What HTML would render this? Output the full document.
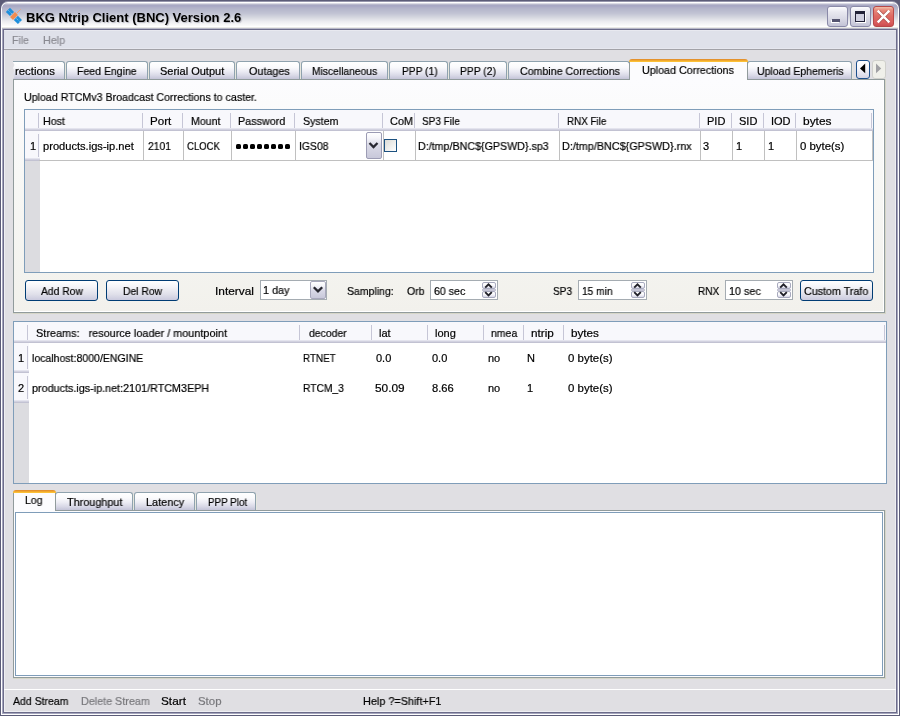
<!DOCTYPE html>
<html><head><meta charset="utf-8"><style>
html,body{margin:0;padding:0;width:900px;height:716px;overflow:hidden;background:#5c5c78}
div,span,svg{position:absolute}
span{will-change:transform;-webkit-text-stroke:0.2px currentColor;font-family:"Liberation Sans",sans-serif;line-height:20px;white-space:pre;color:#000;transform-origin:0 0}
</style></head><body>
<div style="left:0px;top:0px;width:900px;height:716px;background:#5c5c78;border-radius:8px 8px 0 0"></div>
<div style="left:1px;top:1px;width:898px;height:715px;background:#9696ac;border-radius:7px 7px 0 0"></div>
<div style="left:1px;top:2px;width:898px;height:713px;background:#ffffff;border-radius:7px 7px 0 0"></div>
<div style="left:2px;top:3px;width:896px;height:711px;background:#a6a6be;border-radius:6px 6px 0 0"></div>
<div style="left:2px;top:3px;width:896px;height:26px;border-radius:6px 6px 0 0;background:linear-gradient(#dcdce6 0.5px,#b8b8cc 1.5px,#a8a8c4 2.5px,#aaaac6 3.5px,#b0b0c8 4.5px,#b6b8cc 6.5px,#c2c4d4 10.5px,#d6d8e0 14.5px,#ececf0 18.5px,#fafafa 22.5px,#ffffff 23.5px,#eaeae6 24.5px,#b8b8c8 25.5px)"></div>
<div style="left:1px;top:715px;width:898px;height:1px;background:#5c5c78"></div>
<div style="left:1px;top:714px;width:898px;height:1px;background:#ffffff"></div>
<div style="left:2px;top:713px;width:896px;height:1px;background:#a6a6be"></div>
<div style="left:3px;top:29px;width:894px;height:684px;background:#6c6c8a"></div>
<div style="left:4px;top:30px;width:892px;height:682px;background:#eeeef2"></div>
<div style="left:5px;top:31px;width:890px;height:680px;background:#e0dfe3"></div>
<div style="left:4px;top:30px;width:892px;height:20px;background:#dfe1ea"></div>
<div style="left:4px;top:30px;width:892px;height:1px;background:#e8e9f0"></div>
<div style="left:4px;top:48px;width:892px;height:1px;background:#e6e7ef"></div>
<div style="left:4px;top:49px;width:892px;height:1px;background:#a2a2a8"></div>
<div style="left:827px;top:6px;width:19px;height:19px;border-radius:3px;background:linear-gradient(#fcfcfe 0px,#e8e8f0 5px,#d8d8e4 12px,#c0c0d4 20px);border:1px solid #8a8aa8"><div style="left:4px;top:12px;width:8px;height:3px;background:#545470;box-shadow:-1px 1px 0 #ffffff"></div></div>
<div style="left:850px;top:6px;width:19px;height:19px;border-radius:3px;background:linear-gradient(#fcfcfe 0px,#e8e8f0 5px,#d8d8e4 12px,#c0c0d4 20px);border:1px solid #8a8aa8"><div style="left:4px;top:4px;width:8px;height:7px;border:1px solid #222238;border-top:3px solid #222238;background:#d0d0e0;box-shadow:1px 1px 0 #ffffff"></div></div>
<div style="left:873px;top:6px;width:19px;height:19px;border-radius:3px;background:linear-gradient(#f2c0a8 0px,#e88a7c 3px,#de6a64 9px,#d85c5c 16px,#cc4c50 19px);border:1px solid #b84848"><svg style="position:absolute;left:0;top:0" width="19" height="19"><path d="M4.6 4.6 L14.4 14.4 M14.4 4.6 L4.6 14.4" stroke="#702020" stroke-opacity="0.6" stroke-width="3.6" stroke-linecap="butt"/><path d="M4.6 4.6 L14.4 14.4 M14.4 4.6 L4.6 14.4" stroke="#ffffff" stroke-width="2.5" stroke-linecap="square"/></svg></div>
<svg style="position:absolute;left:0;top:0" width="30" height="30"><g transform="translate(14 16) rotate(-45)"><rect x="-2.9" y="-8.6" width="5.8" height="5.8" fill="#1e8fdc"/><rect x="-2.9" y="2.6" width="5.8" height="5.8" fill="#1e8fdc"/><line x1="0" y1="-8.6" x2="0" y2="8.4" stroke="#8cc8ee" stroke-width="0.8" stroke-dasharray="1.2 1"/><rect x="-3.5" y="-2.1" width="7" height="4.2" fill="#f08c50"/><line x1="3.5" y1="0" x2="9.3" y2="0" stroke="#f4a070" stroke-width="0.9"/></g></svg>
<div style="left:13px;top:79px;width:873px;height:235px;background:#d6d6c8"></div>
<div style="left:13px;top:79px;width:872px;height:234px;background:#919b9c"></div>
<div style="left:14px;top:80px;width:870px;height:232px;background:#ffffff"></div>
<div style="left:14px;top:80px;width:869px;height:231px;background:linear-gradient(#fcfcfe 0%,#f8f8f6 40%,#f2f1ec 100%)"></div>
<div style="left:13px;top:61px;width:52px;height:18px;background:linear-gradient(#ffffff 0%,#fafafc 30%,#ececf4 55%,#d8d8e6 80%,#c4c4d8 100%);border:1px solid #8fa2ae;border-bottom:none;border-left:none;border-radius:0 3px 0 0;box-sizing:border-box"></div><div style="left:65px;top:63px;width:1px;height:16px;background:#e6e6de"></div>
<div style="left:66px;top:61px;width:82px;height:18px;background:linear-gradient(#ffffff 0%,#fafafc 30%,#ececf4 55%,#d8d8e6 80%,#c4c4d8 100%);border:1px solid #8fa2ae;border-bottom:none;border-radius:3px 3px 0 0;box-sizing:border-box"></div><div style="left:148px;top:63px;width:1px;height:16px;background:#e6e6de"></div>
<div style="left:149px;top:61px;width:86px;height:18px;background:linear-gradient(#ffffff 0%,#fafafc 30%,#ececf4 55%,#d8d8e6 80%,#c4c4d8 100%);border:1px solid #8fa2ae;border-bottom:none;border-radius:3px 3px 0 0;box-sizing:border-box"></div><div style="left:235px;top:63px;width:1px;height:16px;background:#e6e6de"></div>
<div style="left:236px;top:61px;width:64px;height:18px;background:linear-gradient(#ffffff 0%,#fafafc 30%,#ececf4 55%,#d8d8e6 80%,#c4c4d8 100%);border:1px solid #8fa2ae;border-bottom:none;border-radius:3px 3px 0 0;box-sizing:border-box"></div><div style="left:300px;top:63px;width:1px;height:16px;background:#e6e6de"></div>
<div style="left:301px;top:61px;width:87px;height:18px;background:linear-gradient(#ffffff 0%,#fafafc 30%,#ececf4 55%,#d8d8e6 80%,#c4c4d8 100%);border:1px solid #8fa2ae;border-bottom:none;border-radius:3px 3px 0 0;box-sizing:border-box"></div><div style="left:388px;top:63px;width:1px;height:16px;background:#e6e6de"></div>
<div style="left:389px;top:61px;width:59px;height:18px;background:linear-gradient(#ffffff 0%,#fafafc 30%,#ececf4 55%,#d8d8e6 80%,#c4c4d8 100%);border:1px solid #8fa2ae;border-bottom:none;border-radius:3px 3px 0 0;box-sizing:border-box"></div><div style="left:448px;top:63px;width:1px;height:16px;background:#e6e6de"></div>
<div style="left:449px;top:61px;width:58px;height:18px;background:linear-gradient(#ffffff 0%,#fafafc 30%,#ececf4 55%,#d8d8e6 80%,#c4c4d8 100%);border:1px solid #8fa2ae;border-bottom:none;border-radius:3px 3px 0 0;box-sizing:border-box"></div><div style="left:507px;top:63px;width:1px;height:16px;background:#e6e6de"></div>
<div style="left:508px;top:61px;width:122px;height:18px;background:linear-gradient(#ffffff 0%,#fafafc 30%,#ececf4 55%,#d8d8e6 80%,#c4c4d8 100%);border:1px solid #8fa2ae;border-bottom:none;border-radius:3px 3px 0 0;box-sizing:border-box"></div><div style="left:630px;top:63px;width:1px;height:16px;background:#e6e6de"></div>
<div style="left:747px;top:61px;width:105px;height:18px;background:linear-gradient(#ffffff 0%,#fafafc 30%,#ececf4 55%,#d8d8e6 80%,#c4c4d8 100%);border:1px solid #8fa2ae;border-bottom:none;border-radius:3px 3px 0 0;box-sizing:border-box"></div><div style="left:852px;top:63px;width:1px;height:16px;background:#e6e6de"></div>
<div style="left:629px;top:61px;width:119px;height:19px;background:#fcfcfe;border:1px solid #919b9c;border-bottom:none;border-top:none;box-sizing:border-box"></div><div style="left:629px;top:59px;width:119px;height:3px;background:linear-gradient(#e08a2c 0px,#e8982c 1px,#f8b830 2px,#ffc83c 3px);border-radius:3px 3px 0 0"></div>
<svg style="position:absolute;left:11px;top:62px" width="4" height="17"><path d="M0 0 L2 0 L3.5 3 L2 6 L3.5 9 L2 12 L3.5 15 L2 17 L0 17 Z" fill="#e0dfe3"/></svg>
<div style="left:856px;top:60px;width:14px;height:19px;border:1px solid #1c4f8c;border-radius:3px;background:linear-gradient(#ffffff 0%,#f8f8fc 40%,#d4d4e4 100%);box-sizing:border-box"></div>
<svg style="position:absolute;left:856px;top:60px" width="14" height="19"><path d="M9.2 3.6 L9.2 13.2 L4 8.4 Z" fill="#000"/></svg>
<div style="left:872px;top:60px;width:14px;height:19px;border:1px solid #d0d0cc;border-radius:3px;background:#f0f0ea;box-sizing:border-box"></div>
<svg style="position:absolute;left:872px;top:60px" width="14" height="19"><path d="M4 3.6 L4 13.2 L9.2 8.4 Z" fill="#a0a0a4"/></svg>
<div style="left:24px;top:109px;width:850px;height:164px;background:#7f9db9"></div>
<div style="left:25px;top:110px;width:848px;height:162px;background:#ffffff"></div>
<div style="left:25px;top:110px;width:848px;height:21px;background:#f8f8fc"></div>
<div style="left:25px;top:128px;width:848px;height:1px;background:#e4e4ee"></div><div style="left:25px;top:129px;width:848px;height:1px;background:#d2d2e0"></div><div style="left:25px;top:130px;width:848px;height:1px;background:#c2c2d2"></div>
<div style="left:38px;top:113px;width:1px;height:15px;background:#c6c6d6"></div>
<div style="left:142px;top:113px;width:1px;height:15px;background:#c6c6d6"></div>
<div style="left:182px;top:113px;width:1px;height:15px;background:#c6c6d6"></div>
<div style="left:230px;top:113px;width:1px;height:15px;background:#c6c6d6"></div>
<div style="left:294px;top:113px;width:1px;height:15px;background:#c6c6d6"></div>
<div style="left:382px;top:113px;width:1px;height:15px;background:#c6c6d6"></div>
<div style="left:414px;top:113px;width:1px;height:15px;background:#c6c6d6"></div>
<div style="left:558px;top:113px;width:1px;height:15px;background:#c6c6d6"></div>
<div style="left:699px;top:113px;width:1px;height:15px;background:#c6c6d6"></div>
<div style="left:731px;top:113px;width:1px;height:15px;background:#c6c6d6"></div>
<div style="left:763px;top:113px;width:1px;height:15px;background:#c6c6d6"></div>
<div style="left:795px;top:113px;width:1px;height:15px;background:#c6c6d6"></div>
<div style="left:871px;top:113px;width:1px;height:15px;background:#c6c6d6"></div>
<div style="left:25px;top:131px;width:15px;height:27px;background:#f8f8fc"></div>
<div style="left:38px;top:134px;width:1px;height:23px;background:#c6c6d6"></div>
<div style="left:25px;top:158px;width:15px;height:1px;background:#e4e4ee"></div><div style="left:25px;top:159px;width:15px;height:1px;background:#d2d2e0"></div><div style="left:25px;top:160px;width:15px;height:1px;background:#c2c2d2"></div>
<div style="left:25px;top:161px;width:15px;height:111px;background:#dcdce0"></div>
<div style="left:39px;top:160px;width:834px;height:1px;background:#c0c0c0"></div>
<div style="left:143px;top:131px;width:1px;height:30px;background:#c0c0c0"></div>
<div style="left:183px;top:131px;width:1px;height:30px;background:#c0c0c0"></div>
<div style="left:231px;top:131px;width:1px;height:30px;background:#c0c0c0"></div>
<div style="left:295px;top:131px;width:1px;height:30px;background:#c0c0c0"></div>
<div style="left:383px;top:131px;width:1px;height:30px;background:#c0c0c0"></div>
<div style="left:415px;top:131px;width:1px;height:30px;background:#c0c0c0"></div>
<div style="left:559px;top:131px;width:1px;height:30px;background:#c0c0c0"></div>
<div style="left:700px;top:131px;width:1px;height:30px;background:#c0c0c0"></div>
<div style="left:732px;top:131px;width:1px;height:30px;background:#c0c0c0"></div>
<div style="left:764px;top:131px;width:1px;height:30px;background:#c0c0c0"></div>
<div style="left:796px;top:131px;width:1px;height:30px;background:#c0c0c0"></div>
<div style="left:872px;top:131px;width:1px;height:30px;background:#c0c0c0"></div>
<div style="left:366px;top:132px;width:16px;height:27px;border:1px solid #9c9cb4;border-radius:2px;background:linear-gradient(#ffffff 0%,#f6f6fa 20%,#dcdce8 45%,#c8c8da 100%);box-sizing:border-box"></div>
<svg style="position:absolute;left:366px;top:132px" width="16" height="27"><path d="M3.5 11 L7.5 15 L11.5 11" stroke="#282830" stroke-width="2.3" fill="none"/></svg>
<div style="left:384px;top:139px;width:13px;height:13px;border:1px solid #1c5180;background:linear-gradient(135deg,#dcdcd7,#ffffff);box-sizing:border-box"></div>
<div style="left:236px;top:144px;width:5px;height:5px;border-radius:1.6px;background:#000"></div>
<div style="left:243px;top:144px;width:5px;height:5px;border-radius:1.6px;background:#000"></div>
<div style="left:250px;top:144px;width:5px;height:5px;border-radius:1.6px;background:#000"></div>
<div style="left:257px;top:144px;width:5px;height:5px;border-radius:1.6px;background:#000"></div>
<div style="left:264px;top:144px;width:5px;height:5px;border-radius:1.6px;background:#000"></div>
<div style="left:271px;top:144px;width:5px;height:5px;border-radius:1.6px;background:#000"></div>
<div style="left:278px;top:144px;width:5px;height:5px;border-radius:1.6px;background:#000"></div>
<div style="left:285px;top:144px;width:5px;height:5px;border-radius:1.6px;background:#000"></div>
<div style="left:25px;top:280px;width:73px;height:21px;border:1px solid #003c74;border-radius:3px;background:linear-gradient(#ffffff 0%,#f4f4f8 30%,#e0e0ea 70%,#cacade 100%);box-sizing:border-box"></div>
<div style="left:106px;top:280px;width:73px;height:21px;border:1px solid #003c74;border-radius:3px;background:linear-gradient(#ffffff 0%,#f4f4f8 30%,#e0e0ea 70%,#cacade 100%);box-sizing:border-box"></div>
<div style="left:800px;top:280px;width:73px;height:21px;border:1px solid #003c74;border-radius:3px;background:linear-gradient(#ffffff 0%,#f4f4f8 30%,#e0e0ea 70%,#cacade 100%);box-sizing:border-box"></div>
<div style="left:260px;top:280px;width:67px;height:20px;border:1px solid #a5acb2;background:#ffffff;box-sizing:border-box"></div><div style="left:310px;top:281px;width:16px;height:18px;border:1px solid #a8a8bc;border-radius:2px;background:linear-gradient(#ffffff 0%,#f4f4f8 25%,#d8d8e6 55%,#c8c8da 100%);box-sizing:border-box"></div><svg style="position:absolute;left:310px;top:281px" width="16" height="18"><path d="M3.8 6.2 L8 10.4 L12.2 6.2" stroke="#282830" stroke-width="2.3" fill="none"/></svg>
<div style="left:430px;top:280px;width:68px;height:20px;border:1px solid #a5acb2;background:#ffffff;box-sizing:border-box"></div><div style="left:482px;top:282px;width:14px;height:7px;border:1px solid #a8aabe;border-radius:2px;background:linear-gradient(#ffffff 0%,#f8f8fb 50%,#d8d8e8 100%);box-sizing:border-box"></div><div style="left:482px;top:289px;width:14px;height:2px;background:#c4c4d4"></div><div style="left:482px;top:291px;width:14px;height:7px;border:1px solid #a8aabe;border-radius:2px;background:linear-gradient(#ffffff 0%,#f8f8fb 50%,#d8d8e8 100%);box-sizing:border-box"></div><svg style="position:absolute;left:482px;top:282px" width="14" height="16"><path d="M3.2 5.6 L6.5 2.3 L9.8 5.6 M3.2 10.2 L6.5 13.5 L9.8 10.2" stroke="#202028" stroke-width="1.9" fill="none"/></svg>
<div style="left:578px;top:280px;width:69px;height:20px;border:1px solid #a5acb2;background:#ffffff;box-sizing:border-box"></div><div style="left:631px;top:282px;width:14px;height:7px;border:1px solid #a8aabe;border-radius:2px;background:linear-gradient(#ffffff 0%,#f8f8fb 50%,#d8d8e8 100%);box-sizing:border-box"></div><div style="left:631px;top:289px;width:14px;height:2px;background:#c4c4d4"></div><div style="left:631px;top:291px;width:14px;height:7px;border:1px solid #a8aabe;border-radius:2px;background:linear-gradient(#ffffff 0%,#f8f8fb 50%,#d8d8e8 100%);box-sizing:border-box"></div><svg style="position:absolute;left:631px;top:282px" width="14" height="16"><path d="M3.2 5.6 L6.5 2.3 L9.8 5.6 M3.2 10.2 L6.5 13.5 L9.8 10.2" stroke="#202028" stroke-width="1.9" fill="none"/></svg>
<div style="left:725px;top:280px;width:68px;height:20px;border:1px solid #a5acb2;background:#ffffff;box-sizing:border-box"></div><div style="left:777px;top:282px;width:14px;height:7px;border:1px solid #a8aabe;border-radius:2px;background:linear-gradient(#ffffff 0%,#f8f8fb 50%,#d8d8e8 100%);box-sizing:border-box"></div><div style="left:777px;top:289px;width:14px;height:2px;background:#c4c4d4"></div><div style="left:777px;top:291px;width:14px;height:7px;border:1px solid #a8aabe;border-radius:2px;background:linear-gradient(#ffffff 0%,#f8f8fb 50%,#d8d8e8 100%);box-sizing:border-box"></div><svg style="position:absolute;left:777px;top:282px" width="14" height="16"><path d="M3.2 5.6 L6.5 2.3 L9.8 5.6 M3.2 10.2 L6.5 13.5 L9.8 10.2" stroke="#202028" stroke-width="1.9" fill="none"/></svg>
<div style="left:13px;top:321px;width:874px;height:163px;background:#7f9db9"></div>
<div style="left:14px;top:322px;width:872px;height:161px;background:#ffffff"></div>
<div style="left:14px;top:322px;width:872px;height:21px;background:#f8f8fc"></div>
<div style="left:14px;top:340px;width:872px;height:1px;background:#e4e4ee"></div><div style="left:14px;top:341px;width:872px;height:1px;background:#d2d2e0"></div><div style="left:14px;top:342px;width:872px;height:1px;background:#c2c2d2"></div>
<div style="left:27px;top:325px;width:1px;height:15px;background:#c6c6d6"></div>
<div style="left:299px;top:325px;width:1px;height:15px;background:#c6c6d6"></div>
<div style="left:371px;top:325px;width:1px;height:15px;background:#c6c6d6"></div>
<div style="left:427px;top:325px;width:1px;height:15px;background:#c6c6d6"></div>
<div style="left:483px;top:325px;width:1px;height:15px;background:#c6c6d6"></div>
<div style="left:523px;top:325px;width:1px;height:15px;background:#c6c6d6"></div>
<div style="left:563px;top:325px;width:1px;height:15px;background:#c6c6d6"></div>
<div style="left:884px;top:325px;width:1px;height:15px;background:#c6c6d6"></div>
<div style="left:14px;top:343px;width:15px;height:27px;background:#f8f8fc"></div>
<div style="left:27px;top:346px;width:1px;height:23px;background:#c6c6d6"></div>
<div style="left:14px;top:370px;width:15px;height:1px;background:#e4e4ee"></div><div style="left:14px;top:371px;width:15px;height:1px;background:#d2d2e0"></div><div style="left:14px;top:372px;width:15px;height:1px;background:#c2c2d2"></div>
<div style="left:14px;top:373px;width:15px;height:27px;background:#f8f8fc"></div>
<div style="left:27px;top:376px;width:1px;height:23px;background:#c6c6d6"></div>
<div style="left:14px;top:400px;width:15px;height:1px;background:#e4e4ee"></div><div style="left:14px;top:401px;width:15px;height:1px;background:#d2d2e0"></div><div style="left:14px;top:402px;width:15px;height:1px;background:#c2c2d2"></div>
<div style="left:14px;top:403px;width:15px;height:80px;background:#dcdce0"></div>
<div style="left:13px;top:510px;width:873px;height:169px;background:#d6d6c8"></div>
<div style="left:13px;top:510px;width:872px;height:168px;background:#919b9c"></div>
<div style="left:14px;top:511px;width:870px;height:166px;background:#fcfcfe"></div>
<div style="left:15px;top:512px;width:868px;height:164px;background:#7f9db9"></div>
<div style="left:16px;top:513px;width:866px;height:162px;background:#ffffff"></div>
<div style="left:55px;top:492px;width:78px;height:18px;background:linear-gradient(#ffffff 0%,#fafafc 30%,#ececf4 55%,#d8d8e6 80%,#c4c4d8 100%);border:1px solid #8fa2ae;border-bottom:none;border-radius:3px 3px 0 0;box-sizing:border-box"></div><div style="left:133px;top:494px;width:1px;height:16px;background:#e6e6de"></div>
<div style="left:134px;top:492px;width:61px;height:18px;background:linear-gradient(#ffffff 0%,#fafafc 30%,#ececf4 55%,#d8d8e6 80%,#c4c4d8 100%);border:1px solid #8fa2ae;border-bottom:none;border-radius:3px 3px 0 0;box-sizing:border-box"></div><div style="left:195px;top:494px;width:1px;height:16px;background:#e6e6de"></div>
<div style="left:196px;top:492px;width:60px;height:18px;background:linear-gradient(#ffffff 0%,#fafafc 30%,#ececf4 55%,#d8d8e6 80%,#c4c4d8 100%);border:1px solid #8fa2ae;border-bottom:none;border-radius:3px 3px 0 0;box-sizing:border-box"></div><div style="left:256px;top:494px;width:1px;height:16px;background:#e6e6de"></div>
<div style="left:13px;top:492px;width:43px;height:19px;background:#fcfcfe;border:1px solid #919b9c;border-bottom:none;border-top:none;box-sizing:border-box"></div><div style="left:13px;top:490px;width:43px;height:3px;background:linear-gradient(#e08a2c 0px,#e8982c 1px,#f8b830 2px,#ffc83c 3px);border-radius:3px 3px 0 0"></div>
<div style="left:4px;top:689px;width:892px;height:1px;background:#ffffff"></div>
<span style="left:11.54px;top:30px;font-size:11px;font-weight:normal;transform:scaleX(0.9563);color:#8a8a92">File</span>
<span style="left:43.42px;top:30px;font-size:11px;font-weight:normal;transform:scaleX(0.9762);color:#8a8a92">Help</span>
<div style="left:13px;top:61px;width:50px;height:20px;overflow:hidden"><span style="left:1.76px;top:0;font-size:11px;transform:scaleX(1.0351);">rections</span></div>
<span style="left:77.34px;top:61px;font-size:11px;font-weight:normal;transform:scaleX(0.9557);">Feed Engine</span>
<span style="left:160.10px;top:61px;font-size:11px;font-weight:normal;">Serial Output</span>
<span style="left:248.60px;top:61px;font-size:11px;font-weight:normal;transform:scaleX(0.9805);">Outages</span>
<span style="left:312.37px;top:61px;font-size:11px;font-weight:normal;transform:scaleX(0.9348);">Miscellaneous</span>
<span style="left:401.67px;top:61px;font-size:11px;font-weight:normal;transform:scaleX(0.9297);">PPP (1)</span>
<span style="left:460.46px;top:61px;font-size:11px;font-weight:normal;transform:scaleX(0.9378);">PPP (2)</span>
<span style="left:519.53px;top:61px;font-size:11px;font-weight:normal;transform:scaleX(0.9667);">Combine Corrections</span>
<span style="left:642.32px;top:60px;font-size:11px;font-weight:normal;transform:scaleX(0.9753);">Upload Corrections</span>
<span style="left:757.24px;top:61px;font-size:11px;font-weight:normal;transform:scaleX(0.9573);">Upload Ephemeris</span>
<span style="left:23.83px;top:87px;font-size:11px;font-weight:normal;transform:scaleX(0.9678);">Upload RTCMv3 Broadcast Corrections to caster.</span>
<span style="left:43.43px;top:111px;font-size:11px;font-weight:normal;transform:scaleX(0.9682);">Host</span>
<span style="left:149.75px;top:111px;font-size:11px;font-weight:normal;transform:scaleX(1.0526);">Port</span>
<span style="left:190.54px;top:111px;font-size:11px;font-weight:normal;transform:scaleX(0.9633);">Mount</span>
<span style="left:238.22px;top:111px;font-size:11px;font-weight:normal;transform:scaleX(0.9787);">Password</span>
<span style="left:302.73px;top:111px;font-size:11px;font-weight:normal;transform:scaleX(0.9657);">System</span>
<span style="left:390.41px;top:111px;font-size:11px;font-weight:normal;transform:scaleX(0.9905);">CoM</span>
<span style="left:422.49px;top:111px;font-size:11px;font-weight:normal;transform:scaleX(0.9100);">SP3 File</span>
<span style="left:566.51px;top:111px;font-size:11px;font-weight:normal;transform:scaleX(0.8930);">RNX File</span>
<span style="left:707.20px;top:111px;font-size:11px;font-weight:normal;">PID</span>
<span style="left:739.30px;top:111px;font-size:11px;font-weight:normal;">SID</span>
<span style="left:771.20px;top:111px;font-size:11px;font-weight:normal;">IOD</span>
<span style="left:803.12px;top:111px;font-size:11px;font-weight:normal;transform:scaleX(1.0840);">bytes</span>
<span style="left:29.50px;top:136px;font-size:11px;font-weight:normal;">1</span>
<span style="left:42.69px;top:136px;font-size:11px;font-weight:normal;transform:scaleX(1.0101);">products.igs-ip.net</span>
<span style="left:147.50px;top:136px;font-size:11px;font-weight:normal;transform:scaleX(0.9417);">2101</span>
<span style="left:186.63px;top:136px;font-size:11px;font-weight:normal;transform:scaleX(0.8703);">CLOCK</span>
<span style="left:298.75px;top:136px;font-size:11px;font-weight:normal;transform:scaleX(0.9467);">IGS08</span>
<span style="left:418.33px;top:136px;font-size:11px;font-weight:normal;transform:scaleX(0.9722);">D:/tmp/BNC${GPSWD}.sp3</span>
<span style="left:562.22px;top:136px;font-size:11px;font-weight:normal;transform:scaleX(0.9817);">D:/tmp/BNC${GPSWD}.rnx</span>
<span style="left:703.20px;top:136px;font-size:11px;font-weight:normal;">3</span>
<span style="left:736.10px;top:136px;font-size:11px;font-weight:normal;">1</span>
<span style="left:767.80px;top:136px;font-size:11px;font-weight:normal;">1</span>
<span style="left:800.40px;top:136px;font-size:11px;font-weight:normal;transform:scaleX(1.0357);">0 byte(s)</span>
<span style="left:40.80px;top:281px;font-size:11px;font-weight:normal;transform:scaleX(0.9378);">Add Row</span>
<span style="left:122.56px;top:281px;font-size:11px;font-weight:normal;transform:scaleX(0.9415);">Del Row</span>
<span style="left:215.22px;top:281px;font-size:11px;font-weight:normal;transform:scaleX(1.0800);">Interval</span>
<span style="left:263.32px;top:280px;font-size:11px;font-weight:normal;transform:scaleX(0.9808);">1 day</span>
<span style="left:347.34px;top:281px;font-size:11px;font-weight:normal;transform:scaleX(0.9553);">Sampling:</span>
<span style="left:406.60px;top:281px;font-size:11px;font-weight:normal;transform:scaleX(0.9556);">Orb</span>
<span style="left:433.54px;top:281px;font-size:11px;font-weight:normal;transform:scaleX(0.9645);">60 sec</span>
<span style="left:553.18px;top:281px;font-size:11px;font-weight:normal;transform:scaleX(0.9150);">SP3</span>
<span style="left:582.27px;top:281px;font-size:11px;font-weight:normal;transform:scaleX(0.9250);">15 min</span>
<span style="left:698.29px;top:281px;font-size:11px;font-weight:normal;transform:scaleX(0.9091);">RNX</span>
<span style="left:728.72px;top:281px;font-size:11px;font-weight:normal;transform:scaleX(0.9806);">10 sec</span>
<span style="left:803.63px;top:281px;font-size:11px;font-weight:normal;transform:scaleX(0.9738);">Custom Trafo</span>
<span style="left:35.51px;top:323px;font-size:11px;font-weight:normal;transform:scaleX(0.9885);">Streams:   resource loader / mountpoint</span>
<span style="left:308.60px;top:323px;font-size:11px;font-weight:normal;transform:scaleX(0.9500);">decoder</span>
<span style="left:379.30px;top:323px;font-size:11px;font-weight:normal;">lat</span>
<span style="left:435.40px;top:323px;font-size:11px;font-weight:normal;">long</span>
<span style="left:491.45px;top:323px;font-size:11px;font-weight:normal;transform:scaleX(0.9519);">nmea</span>
<span style="left:531.34px;top:323px;font-size:11px;font-weight:normal;transform:scaleX(1.0650);">ntrip</span>
<span style="left:571.34px;top:323px;font-size:11px;font-weight:normal;transform:scaleX(1.0640);">bytes</span>
<span style="left:18.10px;top:348px;font-size:11px;font-weight:normal;">1</span>
<span style="left:18.40px;top:378px;font-size:11px;font-weight:normal;">2</span>
<span style="left:31.54px;top:348px;font-size:11px;font-weight:normal;transform:scaleX(0.9574);">localhost:8000/ENGINE</span>
<span style="left:31.52px;top:378px;font-size:11px;font-weight:normal;transform:scaleX(0.9799);">products.igs-ip.net:2101/RTCM3EPH</span>
<span style="left:303.41px;top:348px;font-size:11px;font-weight:normal;transform:scaleX(0.8943);">RTNET</span>
<span style="left:376.40px;top:348px;font-size:11px;font-weight:normal;">0.0</span>
<span style="left:431.80px;top:348px;font-size:11px;font-weight:normal;">0.0</span>
<span style="left:487.60px;top:348px;font-size:11px;font-weight:normal;">no</span>
<span style="left:527.20px;top:348px;font-size:11px;font-weight:normal;">N</span>
<span style="left:568.30px;top:348px;font-size:11px;font-weight:normal;transform:scaleX(1.0405);">0 byte(s)</span>
<span style="left:303.37px;top:378px;font-size:11px;font-weight:normal;transform:scaleX(0.9326);">RTCM_3</span>
<span style="left:375.32px;top:378px;font-size:11px;font-weight:normal;transform:scaleX(1.0769);">50.09</span>
<span style="left:432.30px;top:378px;font-size:11px;font-weight:normal;transform:scaleX(1.0143);">8.66</span>
<span style="left:487.60px;top:378px;font-size:11px;font-weight:normal;">no</span>
<span style="left:527.20px;top:378px;font-size:11px;font-weight:normal;">1</span>
<span style="left:568.30px;top:378px;font-size:11px;font-weight:normal;transform:scaleX(1.0405);">0 byte(s)</span>
<span style="left:24.54px;top:490px;font-size:11px;font-weight:normal;transform:scaleX(0.9588);">Log</span>
<span style="left:66.80px;top:492px;font-size:11px;font-weight:normal;transform:scaleX(0.9857);">Throughput</span>
<span style="left:145.61px;top:492px;font-size:11px;font-weight:normal;transform:scaleX(0.9895);">Latency</span>
<span style="left:207.91px;top:492px;font-size:11px;font-weight:normal;transform:scaleX(0.8930);">PPP Plot</span>
<span style="left:12.80px;top:691px;font-size:11px;font-weight:normal;transform:scaleX(0.9534);">Add Stream</span>
<span style="left:80.52px;top:691px;font-size:11px;font-weight:normal;transform:scaleX(0.9783);color:#78787c">Delete Stream</span>
<span style="left:161.33px;top:691px;font-size:11px;font-weight:normal;transform:scaleX(1.0727);">Start</span>
<span style="left:198.16px;top:691px;font-size:11px;font-weight:normal;transform:scaleX(1.0381);color:#78787c">Stop</span>
<span style="left:362.61px;top:691px;font-size:11px;font-weight:normal;transform:scaleX(0.9872);">Help ?=Shift+F1</span>
<span style="left:25.80px;top:8px;font-size:13px;font-weight:bold;color:#000;-webkit-text-stroke:0;text-shadow:1px 1px 1px rgba(90,90,110,.35)">BKG Ntrip Client (BNC) Version 2.6</span>
</body></html>
